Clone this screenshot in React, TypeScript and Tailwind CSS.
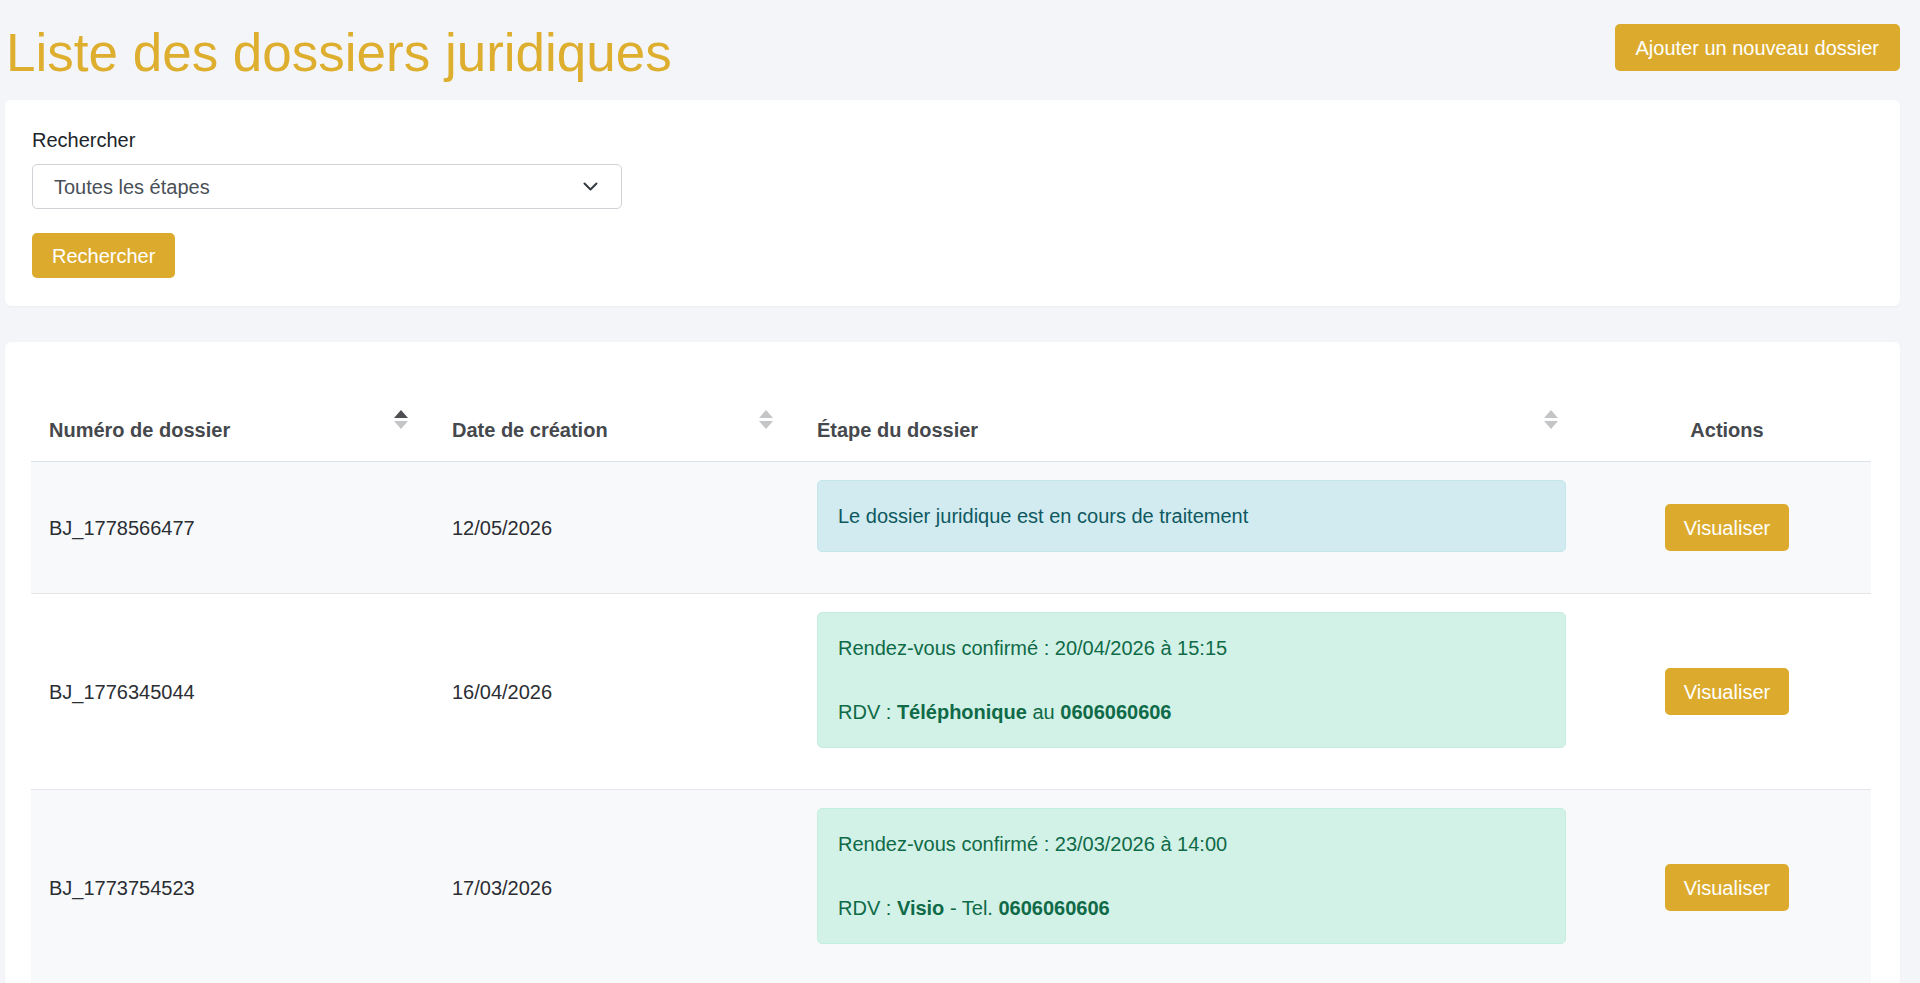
import React from "react";

type Dossier = {
  numero: string;
  date: string;
  etape: "info" | "rdv";
  date_rdv?: string;
  mode?: React.ReactNode;
};

const dossiers: Dossier[] = [
  { numero: "BJ_1778566477", date: "12/05/2026", etape: "info" },
  {
    numero: "BJ_1776345044",
    date: "16/04/2026",
    etape: "rdv",
    date_rdv: "20/04/2026 à 15:15",
    mode: (
      <>
        RDV : <b>Téléphonique</b> au <b>0606060606</b>
      </>
    ),
  },
  {
    numero: "BJ_1773754523",
    date: "17/03/2026",
    etape: "rdv",
    date_rdv: "23/03/2026 à 14:00",
    mode: (
      <>
        RDV : <b>Visio</b> - Tel. <b>0606060606</b>
      </>
    ),
  },
];

// petites flèches de tri (haut / bas)
const SortIcon = ({ active }: { active?: boolean }) => (
  <svg width="14" height="19" viewBox="0 0 14 19" className="shrink-0">
    <path d="M7 0 L14 8 L0 8 Z" fill={active ? "#4d4f52" : "#c4c5c7"} />
    <path d="M0 11 L14 11 L7 19 Z" fill="#c4c5c7" />
  </svg>
);

const App: React.FC = () => {
  return (
    <div className="min-h-screen bg-[#f4f5f9] pl-[5px] pr-[20px] font-['Liberation_Sans',Arial,sans-serif] text-[20px] leading-[30px] text-[#212529]">
      {/* En-tête */}
      <div className="flex items-start justify-between pt-[22px]">
        <h1 className="pl-px text-[53px] leading-[62px] text-[#deae2f]">Liste des dossiers juridiques</h1>
        <button className="mt-[2px] h-[47px] rounded-[5px] bg-[#dcab2d] px-[21px] text-white">
          Ajouter un nouveau dossier
        </button>
      </div>

      {/* Filtre */}
      <div className="mt-[16px] rounded-[6px] bg-white pl-[27px] pr-[27px] pt-[25px] pb-[28px] shadow-[0_1px_2px_rgba(0,0,0,0.03)]">
        <label className="block">Rechercher</label>
        <div className="mt-[9px] flex h-[45px] w-[590px] items-center justify-between rounded-[5px] border border-[#cfd2d6] pl-[21px] pr-[23px] text-[#495057]">
          <span>Toutes les étapes</span>
          <svg width="15" height="9" viewBox="0 0 15 9" fill="none">
            <path d="M1.5 1.5 L7.5 7.5 L13.5 1.5" stroke="#343a40" strokeWidth="2" strokeLinecap="round" strokeLinejoin="round" />
          </svg>
        </div>
        <button className="mt-[24px] h-[45px] rounded-[5px] bg-[#dcab2d] px-[20px] text-white">Rechercher</button>
      </div>

      {/* Tableau */}
      <div className="mt-[36px] rounded-[6px] bg-white pl-[26px] pr-[29px] pt-[58px] shadow-[0_1px_2px_rgba(0,0,0,0.03)]">
        <div className="grid h-[62px] grid-cols-[403px_365px_785px_286px] border-b border-[#dee2e6] font-bold text-[#45484c]">
          <div className="flex items-start justify-between pl-[18px] pr-[26px]">
            <span className="pt-[15px]">Numéro de dossier</span>
            <span className="pt-[10px]"><SortIcon active /></span>
          </div>
          <div className="flex items-start justify-between pl-[18px] pr-[26px]">
            <span className="pt-[15px]">Date de création</span>
            <span className="pt-[10px]"><SortIcon /></span>
          </div>
          <div className="flex items-start justify-between pl-[18px] pr-[26px]">
            <span className="pt-[15px]">Étape du dossier</span>
            <span className="pt-[10px]"><SortIcon /></span>
          </div>
          <div className="pt-[15px] text-center">Actions</div>
        </div>

        {dossiers.map((d, i) => (
          <div
            key={d.numero}
            className={`grid grid-cols-[403px_365px_785px_286px] border-b border-[#e3e5e8] text-[#2b2e33] ${i % 2 === 0 ? "bg-[#f8f9fb]" : "bg-white"}`}
          >
            <div className="flex items-center pl-[18px]">{d.numero}</div>
            <div className="flex items-center pl-[18px]">{d.date}</div>
            <div className="px-[18px] pt-[18px] pb-[21px]">
              {d.etape === "info" ? (
                <div className="mb-[20px] rounded-[5px] border border-[#c4e6ec] bg-[#d1ebf0] p-[20px] text-[#0e5860]">
                  Le dossier juridique est en cours de traitement
                </div>
              ) : (
                <div className="mb-[20px] rounded-[5px] border border-[#c6eee0] bg-[#d2f1e7] p-[20px] text-[#0f6a47]">
                  <div className="mb-[34px]">Rendez-vous confirmé : {d.date_rdv}</div>
                  <div>{d.mode}</div>
                </div>
              )}
            </div>
            <div className="flex items-center justify-center">
              <button className="h-[47px] rounded-[5px] bg-[#dcab2d] px-[19px] text-white">Visualiser</button>
            </div>
          </div>
        ))}
      </div>
    </div>
  );
};

export default App;
